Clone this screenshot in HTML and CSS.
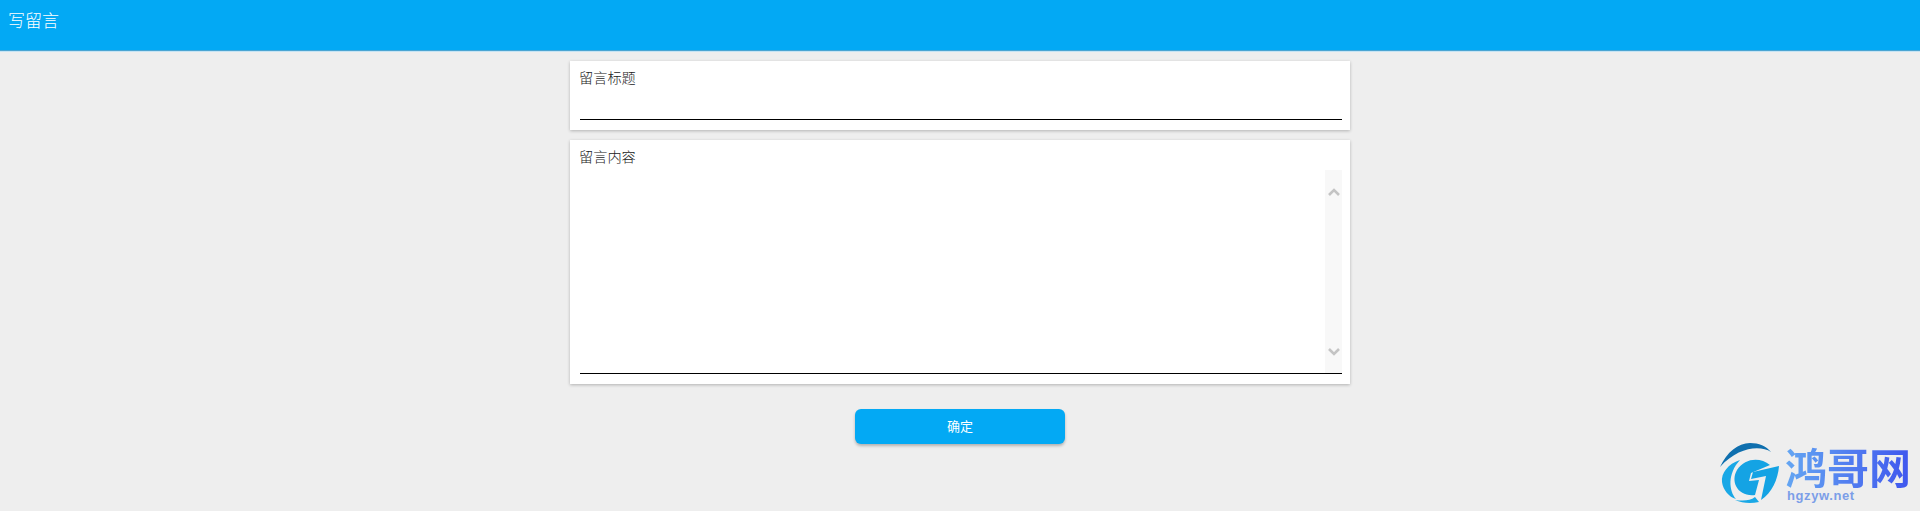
FILE: index.html
```html
<!DOCTYPE html>
<html lang="zh-CN">
<head>
<meta charset="utf-8">
<title>写留言</title>
<link rel="stylesheet" href="styles.css">
</head>
<body>
<header class="bar"><h1 class="bar-title">写留言</h1></header>
<main class="form">
  <section class="card card-title">
    <label class="label">留言标题</label>
    <div class="input-line"></div>
  </section>
  <section class="card card-content">
    <label class="label">留言内容</label>
    <div class="area">
      <div class="area-text"></div>
      <div class="scrollbar">
        <svg class="arrow" viewBox="0 0 12 8" width="12" height="8"><path d="M1 7 L6 2 L11 7" fill="none" stroke="#c4c4c4" stroke-width="2.6"/></svg>
        <svg class="arrow" viewBox="0 0 12 8" width="12" height="8"><path d="M1 1 L6 6 L11 1" fill="none" stroke="#c4c4c4" stroke-width="2.6"/></svg>
      </div>
    </div>
  </section>
  <button class="submit" type="button">确定</button>
</main>
<div class="mark">
  <svg class="mark-logo" viewBox="0 0 60 62" width="60" height="62">
    <path d="M0 24 C7 9 18 0 30 0 C39 0 46 3 51 9 C40 2 18 4 0 24 Z" fill="#0f6fae"/>
    <path d="M20 17 C8 21 1 30 2 39 C3 47 9 54 16 56 C9 48 7 31 20 17 Z" fill="#19a8e6"/>
    <path d="M50 22 C40 14 25 15 17 27 C10 39 18 54 35 52 L39 37 L29 38 L31 30 Z" fill="#14a3e4"/>
    <path d="M33 29 L59 23 C58 36 52 50 41 57 L46 33 L31 36 Z" fill="#14a3e4"/>
    <path d="M15 57 C22 60 30 61 39 59 L35 54 C30 58 23 58 15 57 Z" fill="#19a8e6"/>
  </svg>
  <div class="mark-text">
    <div class="mark-name">鸿哥网</div>
    <div class="mark-url">hgzyw.net</div>
  </div>
</div>
</body>
</html>
```
FILE: styles.css
```css
* { box-sizing: border-box; }
html, body { margin: 0; height: 100%; }
body {
  background: #eeeeee;
  font-family: "Noto Sans CJK SC", "Liberation Sans", sans-serif;
  font-weight: 300;
  overflow: hidden;
  position: relative;
}
.bar {
  height: 51px;
  background: #03a9f4;
  border-bottom: 1px solid #4ba5d2;
  box-shadow: 0 1px 0 #c6e4f4;
  display: flex;
  align-items: center;
  padding: 0 8px 10px;
}
.bar-title { margin: 0; font-size: 17px; font-weight: 300; color: #fff; line-height: 28px; }
.form { width: 780px; margin: 10px auto 0; display: flex; flex-direction: column; align-items: center; }
.card {
  width: 100%;
  background: #fff;
  box-shadow: 0 1px 3px rgba(0, 0, 0, .25);
  padding: 6px 8px 0 10px;
  display: flex;
  flex-direction: column;
}
.label { font-size: 14.2px; line-height: 20px; color: #222; margin-left: -1px; }
.card-title { height: 69px; }
.input-line { width: 100%; height: 1px; background: #000; margin-top: 32px; }
.card-content { height: 244px; margin-top: 10px; }
.area { height: 204px; margin-top: 4px; border-bottom: 1px solid #000; display: flex; }
.area-text { flex: 1; }
.scrollbar {
  width: 17px;
  background: #f8f8f8;
  display: flex;
  flex-direction: column;
  justify-content: space-between;
  align-items: center;
  padding: 18px 0 17px;
}
.arrow { display: block; }
.submit {
  width: 210px;
  height: 35px;
  margin-top: 25px;
  border: 0;
  border-radius: 6px;
  background: #03a9f4;
  box-shadow: 0 2px 3px rgba(0, 0, 0, .25);
  color: #fff;
  font: 400 13px/33px "Noto Sans CJK SC", sans-serif;
  padding: 0 0 2px;
}
.mark {
  position: absolute;
  left: 1720px;
  top: 444px;
  display: flex;
  gap: 5px;
  align-items: flex-start;
}
.mark-logo { display: block; margin-top: -1px; }
.mark-text { display: flex; flex-direction: column; align-items: flex-start; }
.mark-name {
  font: 700 42px/44px "Noto Sans CJK SC", sans-serif;
  height: 45px;
  background: linear-gradient(90deg, #64a6f2, #3f56ee);
  -webkit-background-clip: text;
  background-clip: text;
  color: transparent;
}
.mark-url { font: 700 13px/13px "Liberation Sans", sans-serif; color: #7c9ee8; letter-spacing: .6px; margin-left: 2px; }
```
